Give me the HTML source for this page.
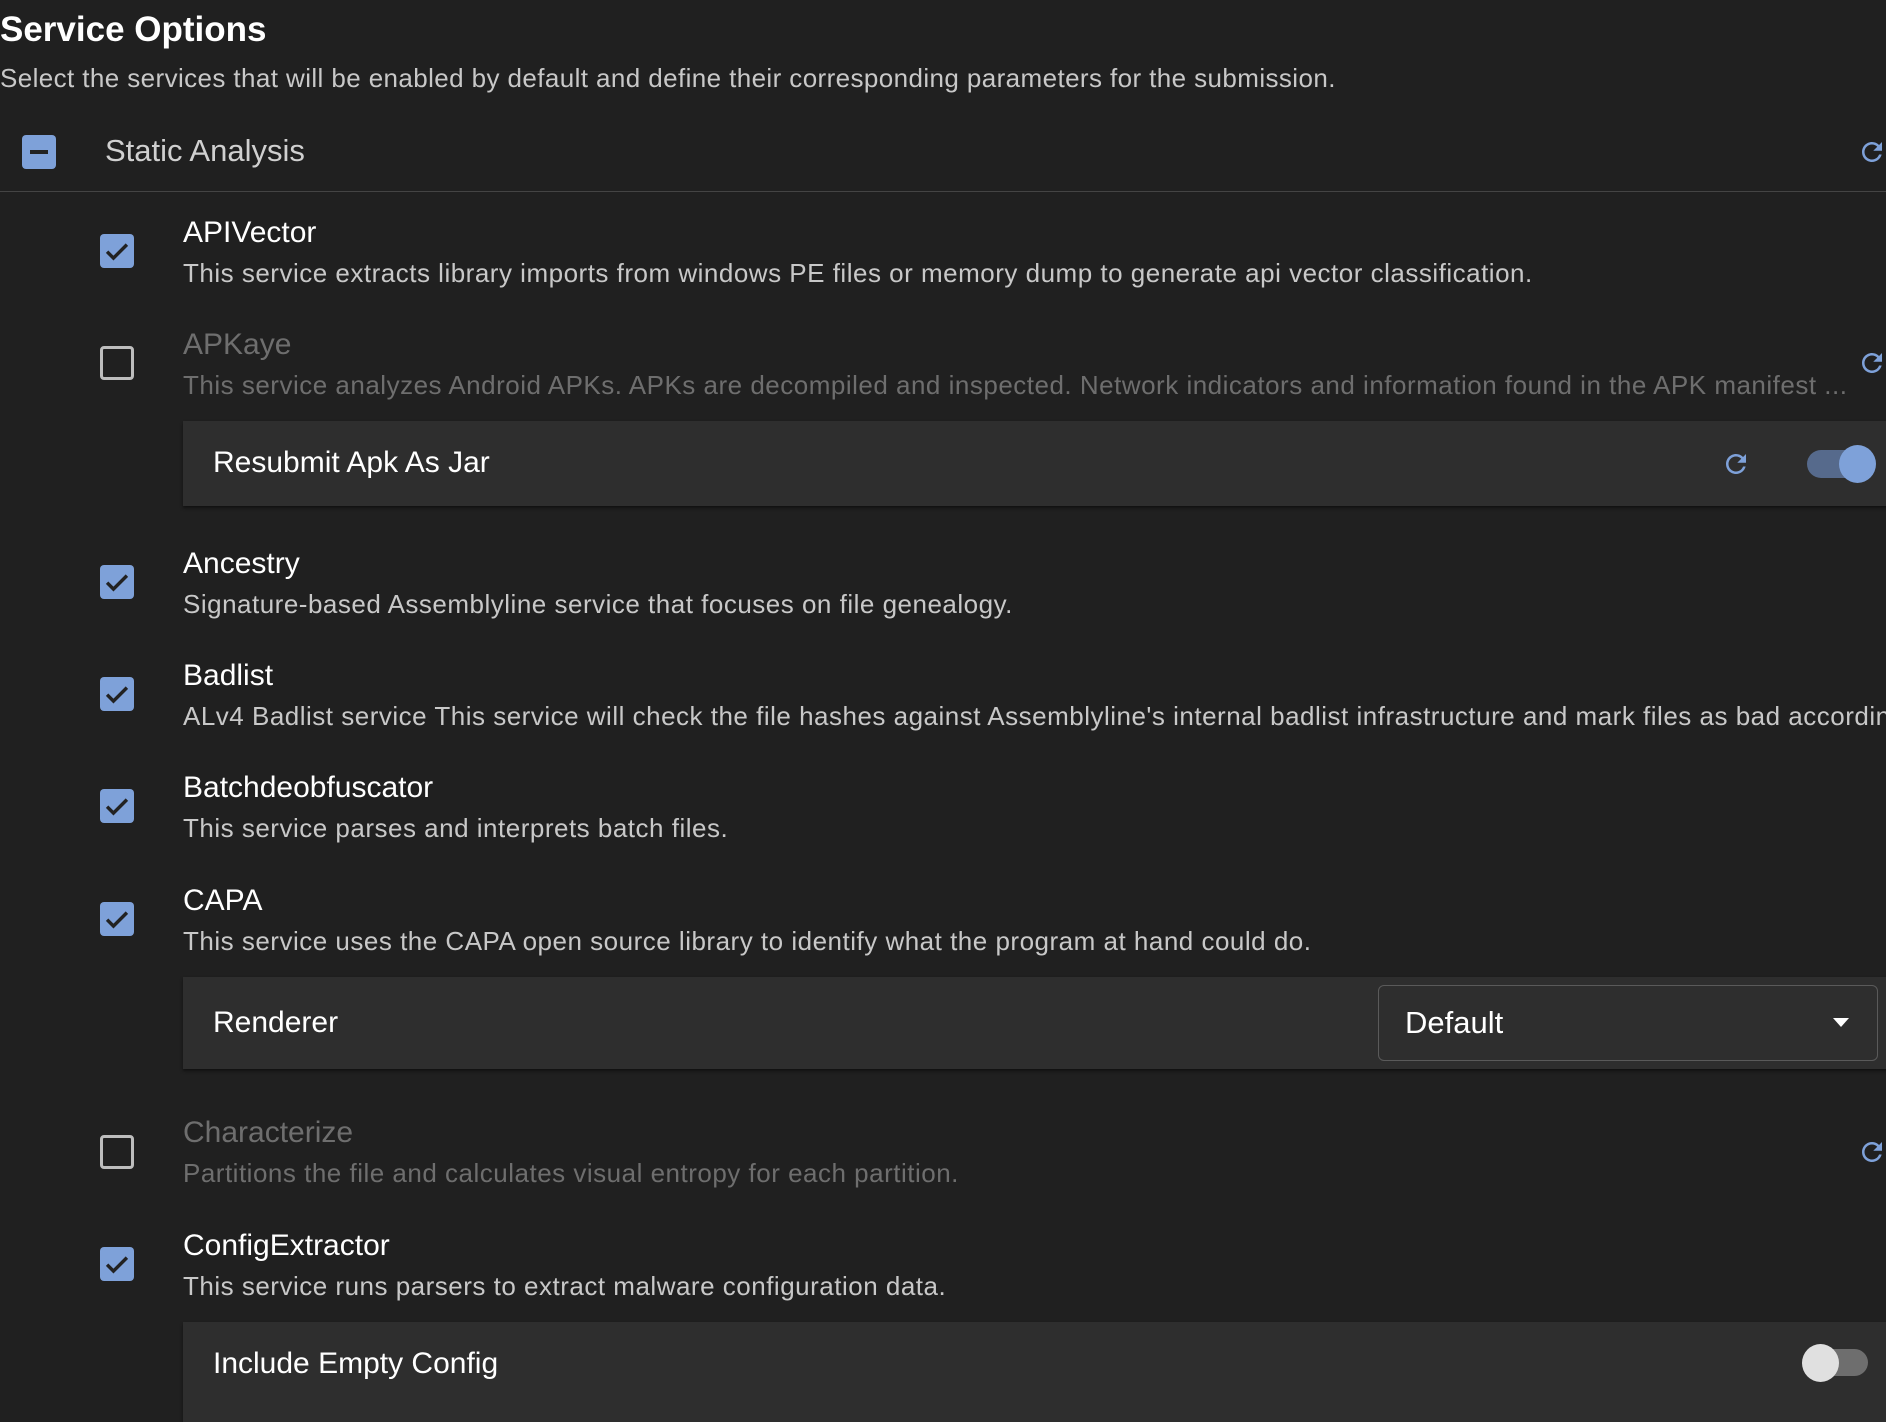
<!DOCTYPE html>
<html><head><meta charset="utf-8"><style>
*{margin:0;padding:0;box-sizing:border-box}
body{width:1886px;height:1406px;background:#202020;font-family:"Liberation Sans",sans-serif;position:relative;overflow:hidden}
.a{position:absolute;white-space:nowrap}
.t{line-height:34px;font-size:30px;color:#fff}
.d{line-height:30px;font-size:26px;color:#c8c8c8;letter-spacing:0.5px}
.dis{color:#6e6e6e}
.cb{position:absolute;width:34px;height:34px;border-radius:4px;background:#7ea1d9}
.cb svg{width:34px;height:34px}
.ub{position:absolute;width:34px;height:34px;border-radius:4px;border:3.5px solid #bdbdbd}
.panel{position:absolute;left:183px;width:1720px;background:#2e2e2e;box-shadow:0 2px 3px rgba(0,0,0,.5)}
.rf{position:absolute;width:30px;height:30px}
.pl{position:absolute;left:30px;font-size:30px;color:#fff;line-height:34px;white-space:nowrap}
</style></head><body>
<div class="a" style="left:0;top:10px;font-size:35px;font-weight:bold;color:#fff;line-height:40px">Service Options</div>
<div class="a" style="left:0;top:63px;font-size:26px;color:#c8c8c8;line-height:30px;letter-spacing:0.4px">Select the services that will be enabled by default and define their corresponding parameters for the submission.</div>

<div class="cb" style="left:22px;top:135px;"><div style="position:absolute;left:8px;top:15px;width:18px;height:4px;background:#222"></div></div>
<div class="a" style="left:105px;top:134px;font-size:31px;color:#d0d0d0;line-height:34px">Static Analysis</div>
<svg class="rf" style="left:1857px;top:137px" viewBox="0 0 24 24"><path fill="#7ea1d9" d="M17.65 6.35C16.2 4.9 14.21 4 12 4c-4.42 0-7.99 3.58-7.99 8s3.57 8 7.99 8c3.73 0 6.84-2.55 7.73-6h-2.08c-.82 2.33-3.04 4-5.65 4-3.31 0-6-2.690-6-6s2.69-6 6-6c1.66 0 3.14.69 4.22 1.78L13 11h7V4l-2.35 2.35z"/></svg>
<div class="a" style="left:0;top:191px;width:1886px;height:1px;background:#444"></div>

<div class="cb" style="left:100px;top:234px"><svg viewBox="0 0 24 24"><path d="M5 12.5l4.5 4.5L19 7.5" fill="none" stroke="#222" stroke-width="2.4"/></svg></div>
<div class="a t" style="left:183px;top:216px">APIVector</div>
<div class="a d" style="left:183px;top:258px">This service extracts library imports from windows PE files or memory dump to generate api vector classification.</div>

<div class="ub" style="left:100px;top:346px"></div>
<div class="a t dis" style="left:183px;top:328px">APKaye</div>
<div class="a d dis" style="left:183px;top:370px">This service analyzes Android APKs. APKs are decompiled and inspected. Network indicators and information found in the APK manifest ...</div>
<svg class="rf" style="left:1857px;top:348px" viewBox="0 0 24 24"><path fill="#7ea1d9" d="M17.65 6.35C16.2 4.9 14.21 4 12 4c-4.42 0-7.99 3.58-7.99 8s3.57 8 7.99 8c3.73 0 6.84-2.55 7.73-6h-2.08c-.82 2.33-3.04 4-5.65 4-3.31 0-6-2.69-6-6s2.69-6 6-6c1.66 0 3.14.69 4.22 1.78L13 11h7V4l-2.35 2.35z"/></svg>

<div class="panel" style="top:421px;height:85px">
 <div class="pl" style="top:25px">Resubmit Apk As Jar</div>
 <svg class="rf" style="left:1538px;top:28px" viewBox="0 0 24 24"><path fill="#7ea1d9" d="M17.65 6.35C16.2 4.9 14.21 4 12 4c-4.42 0-7.99 3.58-7.99 8s3.57 8 7.99 8c3.73 0 6.84-2.55 7.73-6h-2.08c-.82 2.33-3.04 4-5.65 4-3.31 0-6-2.69-6-6s2.69-6 6-6c1.66 0 3.14.69 4.22 1.78L13 11h7V4l-2.35 2.35z"/></svg>
 <div class="a" style="left:1624px;top:29px;width:64px;height:28px;border-radius:14px;background:#566a8c"></div>
 <div class="a" style="left:1656px;top:24px;width:37px;height:38px;border-radius:50%;background:#7ea1d9"></div>
</div>

<div class="cb" style="left:100px;top:565px"><svg viewBox="0 0 24 24"><path d="M5 12.5l4.5 4.5L19 7.5" fill="none" stroke="#222" stroke-width="2.4"/></svg></div>
<div class="a t" style="left:183px;top:547px">Ancestry</div>
<div class="a d" style="left:183px;top:589px">Signature-based Assemblyline service that focuses on file genealogy.</div>

<div class="cb" style="left:100px;top:677px"><svg viewBox="0 0 24 24"><path d="M5 12.5l4.5 4.5L19 7.5" fill="none" stroke="#222" stroke-width="2.4"/></svg></div>
<div class="a t" style="left:183px;top:659px">Badlist</div>
<div class="a d" style="left:183px;top:701px">ALv4 Badlist service This service will check the file hashes against Assemblyline's internal badlist infrastructure and mark files as bad according</div>

<div class="cb" style="left:100px;top:789px"><svg viewBox="0 0 24 24"><path d="M5 12.5l4.5 4.5L19 7.5" fill="none" stroke="#222" stroke-width="2.4"/></svg></div>
<div class="a t" style="left:183px;top:771px">Batchdeobfuscator</div>
<div class="a d" style="left:183px;top:813px">This service parses and interprets batch files.</div>

<div class="cb" style="left:100px;top:902px"><svg viewBox="0 0 24 24"><path d="M5 12.5l4.5 4.5L19 7.5" fill="none" stroke="#222" stroke-width="2.4"/></svg></div>
<div class="a t" style="left:183px;top:884px">CAPA</div>
<div class="a d" style="left:183px;top:926px">This service uses the CAPA open source library to identify what the program at hand could do.</div>

<div class="panel" style="top:977px;height:92px">
 <div class="pl" style="top:29px">Renderer</div>
 <div class="a" style="left:1195px;top:8px;width:500px;height:76px;border:1.5px solid #5a5a5a;border-radius:6px"></div>
 <div class="a" style="left:1222px;top:29px;font-size:31px;color:#fff;line-height:34px">Default</div>
 <div class="a" style="left:1650px;top:41px;width:0;height:0;border-left:8px solid transparent;border-right:8px solid transparent;border-top:9px solid #fff"></div>
</div>

<div class="ub" style="left:100px;top:1135px"></div>
<div class="a t dis" style="left:183px;top:1116px">Characterize</div>
<div class="a d dis" style="left:183px;top:1158px">Partitions the file and calculates visual entropy for each partition.</div>
<svg class="rf" style="left:1857px;top:1137px" viewBox="0 0 24 24"><path fill="#7ea1d9" d="M17.65 6.35C16.2 4.9 14.21 4 12 4c-4.42 0-7.99 3.58-7.99 8s3.57 8 7.99 8c3.73 0 6.84-2.55 7.73-6h-2.08c-.82 2.33-3.04 4-5.65 4-3.31 0-6-2.69-6-6s2.69-6 6-6c1.66 0 3.14.69 4.22 1.78L13 11h7V4l-2.35 2.35z"/></svg>

<div class="cb" style="left:100px;top:1247px"><svg viewBox="0 0 24 24"><path d="M5 12.5l4.5 4.5L19 7.5" fill="none" stroke="#222" stroke-width="2.4"/></svg></div>
<div class="a t" style="left:183px;top:1229px">ConfigExtractor</div>
<div class="a d" style="left:183px;top:1271px">This service runs parsers to extract malware configuration data.</div>

<div class="panel" style="top:1322px;height:100px">
 <div class="pl" style="top:25px">Include Empty Config</div>
 <div class="a" style="left:1623px;top:27px;width:62px;height:27px;border-radius:14px;background:#6e6e6e"></div>
 <div class="a" style="left:1619px;top:22px;width:37px;height:38px;border-radius:50%;background:#e0e0e0"></div>
</div>
</body></html>
